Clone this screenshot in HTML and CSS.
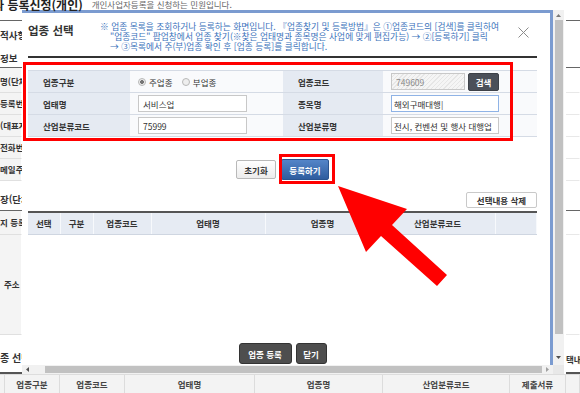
FILE: index.html
```html
<!DOCTYPE html>
<html lang="ko">
<head>
    <meta charset="UTF-8">
    <meta name="viewport" content="width=device-width, initial-scale=1.0">
    <title>업종 선택</title>
    <link rel="stylesheet" href="styles.css">
</head>
<body>
    <div class="screen">
        <div class="page-title">
            <h1>자 등록신청(개인)</h1>
            <span class="page-desc">개인사업자등록을 신청하는 민원입니다.</span>
        </div>

        <div class="side side-left">
            <div class="side-gap"></div>
            <div class="side-cap">적사항</div>
            <div class="side-sub">정보</div>
            <div class="side-row side-row-first">명(단체명)</div>
            <div class="side-row">등록번호</div>
            <div class="side-row">(대표자)</div>
            <div class="side-row">전화번호</div>
            <div class="side-row">메일주소</div>
            <div class="side-sec">장(단체)</div>
            <div class="side-row side-row-mid">지 등록</div>
            <div class="side-row side-row-tall">주소</div>
            <div class="side-end">종 선택</div>
        </div>

        <div class="modal">
            <div class="modal-head">
                <h2>업종 선택</h2>
                <p class="note">
                    <span class="note-first">※ 업종 목록을 조회하거나 등록하는 화면입니다. 『업종찾기 및 등록방법』은 ①업종코드의 [검색]를 클릭하여</span>
                    <span>"업종코드" 팝업창에서 업종 찾기(※찾은 업태명과 종목명은 사업에 맞게 편집가능) → ②[등록하기] 클릭</span>
                    <span>→ ③목록에서 주(부)업종 확인 후 [업종 등록]를 클릭합니다.</span>
                </p>
                <span class="close">
                    <svg width="11" height="11" viewBox="0 0 11 11"><path d="M0.5 0.5L10.5 10.5M10.5 0.5L0.5 10.5" stroke="#8c8c8c" stroke-width="1"/></svg>
                </span>
            </div>

            <table class="form-table">
                <colgroup>
                    <col class="c-label"><col class="c-value"><col class="c-label2"><col class="c-value2">
                </colgroup>
                <tr>
                    <th>업종구분</th>
                    <td>
                        <label class="radio"><input type="radio" name="kind" checked>주업종</label>
                        <label class="radio"><input type="radio" name="kind">부업종</label>
                    </td>
                    <th>업종코드</th>
                    <td><input type="text" class="field field-code" value="749609" readonly><button class="btn btn-search">검색</button></td>
                </tr>
                <tr>
                    <th>업태명</th>
                    <td><input type="text" class="field" value="서비스업"></td>
                    <th>종목명</th>
                    <td><input type="text" class="field field-wide field-focus" value="해외구매대행|"></td>
                </tr>
                <tr>
                    <th>산업분류코드</th>
                    <td><input type="text" class="field" value="75999"></td>
                    <th>산업분류명</th>
                    <td><input type="text" class="field field-wide" value="전시, 컨벤션 및 행사 대행업"></td>
                </tr>
            </table>

            <div class="actions">
                <button class="btn btn-light">초기화</button>
                <button class="btn btn-blue">등록하기</button>
            </div>

            <div class="list-tools">
                <button class="btn btn-light btn-delete">선택내용 삭제</button>
            </div>

            <table class="list-table">
                <colgroup>
                    <col class="l-sel"><col class="l-kind"><col class="l-code"><col class="l-biz"><col class="l-item"><col class="l-ind"><col>
                </colgroup>
                <thead>
                    <tr><th>선택</th><th>구분</th><th>업종코드</th><th>업태명</th><th>업종명</th><th>산업분류코드</th><th></th></tr>
                </thead>
                <tbody>
                    <tr><td colspan="7"></td></tr>
                </tbody>
            </table>

            <div class="modal-foot">
                <button class="btn btn-dark btn-register">업종 등록</button>
                <button class="btn btn-dark btn-close">닫기</button>
            </div>
        </div>

        <div class="vscroll">
            <div class="sb-arrow"><svg width="5" height="3" viewBox="0 0 5 3"><path d="M0 3H5L2.5 0Z" fill="#7a7a7a"/></svg></div>
            <div class="thumb"></div>
            <div class="sb-space"></div>
            <div class="sb-arrow"><svg width="5" height="3" viewBox="0 0 5 3"><path d="M0 0H5L2.5 3Z" fill="#505050"/></svg></div>
        </div>

        <div class="side side-right">
            <div class="side-gap"></div>
            <div class="side-cap"></div>
            <div class="side-sub"></div>
            <div class="side-row side-row-first"></div>
            <div class="side-row"></div>
            <div class="side-row"></div>
            <div class="side-row"></div>
            <div class="side-row"></div>
            <div class="side-sec"></div>
            <div class="side-row side-row-mid"></div>
            <div class="side-row side-row-tall"></div>
            <div class="side-end">택내용 삭제</div>
        </div>

        <div class="hscroll">
            <div class="sb-arrow sb-left"><svg width="3" height="5" viewBox="0 0 3 5"><path d="M3 0V5L0 2.5Z" fill="#505050"/></svg></div>
            <div class="thumb"></div>
            <div class="sb-arrow sb-right"><svg width="3" height="5" viewBox="0 0 3 5"><path d="M0 0V5L3 2.5Z" fill="#a0a0a0"/></svg></div>
        </div>
        <div class="corner"></div>

        <div class="grid-head">
            <span></span>
            <span>업종구분</span>
            <span>업종코드</span>
            <span>업태명</span>
            <span>업종명</span>
            <span>산업분류코드</span>
            <span>제출서류</span>
            <span></span>
        </div>

        <div class="mark mark-form"></div>
        <div class="mark mark-submit"></div>
        <svg class="arrow" width="580" height="393" viewBox="0 0 580 393">
            <polygon points="338,186 407,209 392,225 447,275 437,286 381,236 366,252" fill="#ff0000"/>
        </svg>
    </div>
</body>
</html>
```

FILE: styles.css
```css
* {
    box-sizing: border-box;
}

body {
    margin: 0;
    font-family: "Noto Sans CJK KR", "Noto Sans", sans-serif;
    font-size: 8.5px;
    color: #333;
    background: #fff;
    overflow: hidden;
}

.screen {
    position: relative;
    display: grid;
    grid-template-columns: 22px 531px 11px 16px;
    grid-template-rows: 10px 355px 9px 19px;
    width: 580px;
    height: 393px;
}

/* page behind the popup */
.page-title {
    grid-column: 1 / -1;
    grid-row: 1;
    position: relative;
    z-index: 2;
    display: flex;
    align-items: flex-start;
    white-space: nowrap;
}

.page-title h1 {
    margin: -2px 0 0 -7px;
    font-size: 12px;
    line-height: 14px;
    color: #222;
}

.page-desc {
    margin: -1px 0 0 9px;
    line-height: 10px;
    color: #666;
}

.side {
    grid-row: 2 / 4;
    display: flex;
    flex-direction: column;
    overflow: hidden;
    white-space: nowrap;
    font-weight: bold;
    color: #333;
}

.side-left {
    grid-column: 1;
}

.side-right {
    grid-column: 4;
    padding-left: 2px;
}

.side-gap {
    height: 11px;
    border-bottom: 1px solid #666;
}

.side-cap {
    height: 28px;
    line-height: 28px;
    font-size: 9.5px;
}

.side-sub {
    height: 19px;
    line-height: 18px;
    font-size: 9.5px;
    border-bottom: 1px solid #666;
}

.side-row {
    height: 22px;
    line-height: 21px;
    background: #f4f4f4;
    border-bottom: 1px solid #e0e0e0;
    border-right: 1px solid #fff;
}

.side-row-first {
    height: 25px;
    line-height: 26px;
}

.side-row-mid {
    height: 24px;
    line-height: 23px;
}

.side-row-tall {
    height: 100px;
    line-height: 99px;
    padding-left: 4px;
}

.side-right .side-row {
    background: #fff;
    border-bottom-color: #e8e8e8;
}

.side-sec {
    height: 30px;
    padding-top: 9px;
    line-height: 18px;
    font-size: 9.5px;
    border-bottom: 1px solid #666;
}

.side-end {
    flex: 1;
    padding-top: 15px;
    line-height: 16px;
    font-size: 10px;
    border-bottom: 2px solid #555;
}

.side-right .side-end {
    padding-top: 16px;
    font-size: 8.5px;
}

/* popup */
.modal {
    grid-column: 2;
    grid-row: 2;
    background: #fff;
    border-top: 3px solid #7b9bd0;
    border-right: 3px solid #7b9bd0;
    padding: 0 13px 0 6px;
    overflow: hidden;
}

.modal-head {
    display: flex;
    height: 45px;
    border-bottom: 2px solid #333;
}

.modal-head h2 {
    flex: none;
    width: 72px;
    margin: 0;
    padding-top: 10px;
    font-size: 11.5px;
    line-height: 14px;
    color: #333;
}

.note {
    flex: 1;
    margin: 0;
    padding-top: 9px;
    font-size: 8.72px;
    line-height: 10px;
    color: #3a72bb;
    white-space: nowrap;
}

.note span {
    display: block;
    padding-left: 10px;
}

.note .note-first {
    padding-left: 0;
}

.close {
    flex: none;
    width: 11px;
    height: 11px;
    margin: 14px 8px 0 0;
}

.close svg {
    display: block;
}

.form-table {
    width: 100%;
    margin-top: 12px;
    border-collapse: collapse;
    table-layout: fixed;
    border-top: 1px solid #d5dbe5;
}

.c-label { width: 102px; }
.c-value { width: 153px; }
.c-label2 { width: 100px; }
.c-value2 { width: 154px; }

.form-table th {
    height: 22px;
    padding: 0 0 0 15px;
    background: #e5eaf2;
    text-align: left;
    font-weight: bold;
    color: #333;
    border-bottom: 1px solid #d5dbe5;
}

.form-table td {
    height: 22px;
    padding: 0 8px;
    background: #f9fafc;
    border-bottom: 1px solid #d5dbe5;
    white-space: nowrap;
}

.radio {
    display: inline-flex;
    align-items: center;
    gap: 3px;
    margin-right: 7px;
    vertical-align: middle;
}

.radio input {
    appearance: none;
    width: 8px;
    height: 8px;
    margin: 0;
    border: 1px solid #b8b8b8;
    border-radius: 50%;
    background: #eee;
}

.radio input:checked {
    background: radial-gradient(circle, #767676 0 1.7px, #eee 2.2px);
}

.field {
    width: 109px;
    height: 17px;
    padding: 0 4px;
    border: 1px solid #c8c8c8;
    background: #fff;
    font: inherit;
    color: #333;
    vertical-align: middle;
    outline: none;
}

.field-wide {
    width: 108px;
    padding: 0 2px;
}

.field-code {
    width: 74px;
    color: #8a8a8a;
    background: repeating-linear-gradient(-45deg, #f5f5f5 0 2px, #e6e6e6 2px 3px);
}

.field-focus {
    border-color: #8fb3e6;
}

.btn {
    padding: 0;
    font: inherit;
    font-weight: bold;
    border-radius: 2px;
    cursor: pointer;
    vertical-align: middle;
}

.btn-search {
    width: 31px;
    height: 18px;
    margin-left: 3px;
    border: 1px solid #3d4148;
    background: #4b5059;
    color: #fff;
}

.actions {
    display: flex;
    justify-content: center;
    align-items: center;
    gap: 5px;
    margin-top: 22px;
}

.btn-light {
    width: 40px;
    height: 19px;
    border: 1px solid #b9b9b9;
    background: linear-gradient(#fff, #ececec);
    color: #333;
}

.btn-blue {
    width: 48px;
    height: 21px;
    border: 1px solid #2b548f;
    background: linear-gradient(#5485c8, #2f5d9f);
    color: #fff;
}

.list-tools {
    display: flex;
    justify-content: flex-end;
    margin-top: 12px;
}

.btn-delete {
    width: 71px;
    height: 16px;
    border-color: #c9c9c9;
    background: #fff;
}

.list-table {
    width: 100%;
    margin-top: 3px;
    border-collapse: collapse;
    table-layout: fixed;
    border-top: 2px solid #555;
}

.l-sel { width: 32px; }
.l-kind { width: 33px; }
.l-code { width: 58px; }
.l-biz { width: 114px; }
.l-item { width: 115px; }
.l-ind { width: 115px; }

.list-table th {
    height: 22px;
    padding: 0;
    background: #e6ebf3;
    font-weight: bold;
    color: #333;
    border-right: 1px solid #f7f9fc;
    border-bottom: 1px solid #cfd6e1;
}

.list-table td {
    height: 99px;
    padding: 0;
}

.modal-foot {
    display: flex;
    justify-content: center;
    gap: 4px;
    margin-top: 10px;
}

.btn-dark {
    height: 21px;
    border: 1px solid #333;
    border-radius: 3px;
    background: #4e4e4e;
    color: #fff;
}

.btn-register {
    width: 53px;
}

.btn-close {
    width: 31px;
}

/* scrollbars */
.vscroll {
    grid-column: 3;
    grid-row: 2;
    display: flex;
    flex-direction: column;
    align-items: center;
    padding-bottom: 3px;
    background: #f1f1f1;
}

.vscroll .thumb {
    width: 8px;
    height: 314px;
    background: #c1c1c1;
}

.sb-arrow {
    display: flex;
    align-items: center;
    justify-content: center;
    height: 10px;
}

.sb-arrow svg {
    display: block;
}

.sb-space {
    flex: 1;
}

.hscroll {
    grid-column: 2;
    grid-row: 3;
    display: flex;
    align-items: center;
    background: #f1f1f1;
}

.hscroll .sb-arrow {
    width: 11px;
    height: 9px;
}

.sb-left {
    margin-right: 12px;
}

.hscroll .thumb {
    width: 497px;
    height: 7px;
    background: #c1c1c1;
}

.corner {
    grid-column: 3;
    grid-row: 3;
    background: #e8e8e8;
}

.grid-head {
    grid-column: 1 / -1;
    grid-row: 4;
    display: grid;
    grid-template-columns: 5px 55px 65px 130px 128px 127px 56px 1fr;
    background: #f3f3f3;
    border-top: 1px solid #ddd;
}

.grid-head span {
    line-height: 18px;
    text-align: center;
    font-weight: bold;
    color: #444;
    border-right: 1px solid #dcdcdc;
    white-space: nowrap;
}

/* red annotation marks */
.mark {
    position: absolute;
    border: 3px solid #ff0000;
    pointer-events: none;
}

.mark-form {
    left: 23px;
    top: 62px;
    width: 490px;
    height: 79px;
}

.mark-submit {
    left: 279px;
    top: 154px;
    width: 56px;
    height: 30px;
}

.arrow {
    position: absolute;
    left: 0;
    top: 0;
    pointer-events: none;
}
```
